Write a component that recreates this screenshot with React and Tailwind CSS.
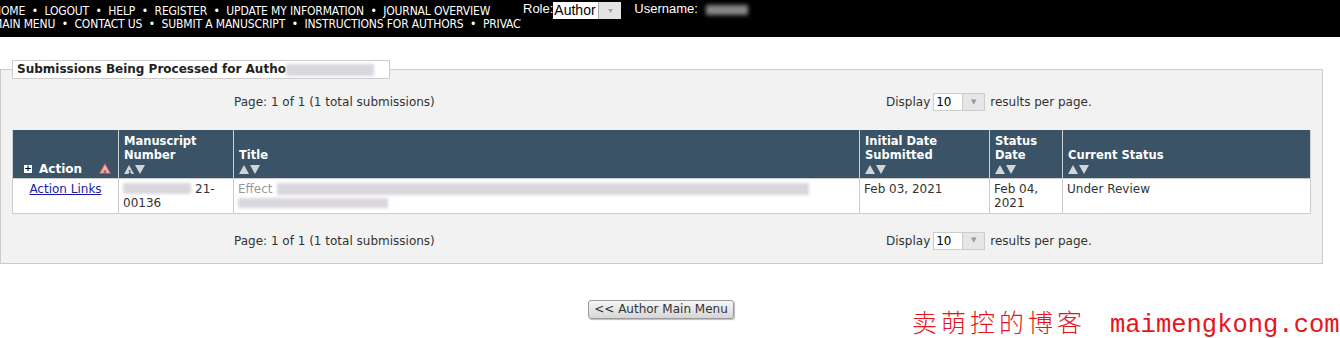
import React from "react";

const body = { fontFamily: '"DejaVu Sans", Verdana, sans-serif' };

function SortArrows({ first }) {
  return (
    <svg width="22" height="10" viewBox="0 0 22 10" className="inline-block">
      <polygon points="0,10 5,1 10,10" fill="#d4d4d4" />
      {first && (
        <text x="4" y="9.5" fontSize="5" fill="#333" fontFamily="DejaVu Sans">
          1
        </text>
      )}
      <polygon points="11,1 21,1 16,10" fill="#d4d4d4" />
    </svg>
  );
}

function Blur({ w, h = 11, className = "" }) {
  return (
    <span
      className={`inline-block align-middle bg-[#d9d6de] blur-[1.5px] ${className}`}
      style={{ width: w, height: h }}
    />
  );
}

function PageRow() {
  return (
    <div className="flex items-center h-[18px] text-[12px] text-[#333]">
      <div className="w-[874px] pl-[222px]">Page: 1 of 1 (1 total submissions)</div>
      <div className="flex items-center">
        <span>Display</span>
        <span className="ml-[3px] flex h-[18px] w-[52px] border border-[#ccc] bg-white">
          <span className="w-[29px] pl-[2px] leading-[17px] text-[12px] text-black border-r border-[#ccc]">10</span>
          <span className="flex-1 bg-[#e6e6e6] flex items-center justify-center text-[7px] text-[#999]">▼</span>
        </span>
        <span className="ml-[5px]">results per page.</span>
      </div>
    </div>
  );
}

const th =
  "border-l border-r border-[#c8d0d6] px-[5px] pb-[2px] align-bottom text-left font-bold text-white text-[11.5px] leading-[14px]";
const td = "border border-[#ccc] px-[4px] pt-[3px] align-top text-[12px] leading-[14px] text-[#333]";

export default function App() {
  return (
    <div className="relative w-[1340px] h-[338px] bg-white overflow-hidden" style={body}>
      {/* ──── Top bar ──── */}
      <div className="flex h-[37px] bg-black text-white">
        <div
          className="w-[528px] -ml-[7px] overflow-hidden whitespace-nowrap pt-[5px] text-[12px] leading-[13px] tracking-[-0.15px]"
          style={{ fontFamily: '"DejaVu Sans Condensed", "Liberation Sans", sans-serif' }}
        >
          <div>HOME &nbsp;•&nbsp; LOGOUT &nbsp;•&nbsp; HELP &nbsp;•&nbsp; REGISTER &nbsp;•&nbsp; UPDATE MY INFORMATION &nbsp;•&nbsp; JOURNAL OVERVIEW</div>
          <div>MAIN MENU &nbsp;•&nbsp; CONTACT US &nbsp;•&nbsp; SUBMIT A MANUSCRIPT &nbsp;•&nbsp; INSTRUCTIONS FOR AUTHORS &nbsp;•&nbsp; PRIVACY POLICY</div>
        </div>
        <div className="flex items-start pt-[1px] text-[13px] leading-[16px]" style={{ fontFamily: '"Liberation Sans", sans-serif' }}>
          <span className="ml-[2px]">Role:</span>
          <span className="mt-[1px] flex h-[17px] w-[68px] bg-white text-black">
            <span className="w-[46px] pl-[1px] border-r border-[#aaa] leading-[17px] text-[14px]">Author</span>
            <span className="flex-1 bg-[#e3e3e3] flex items-center justify-center text-[7px] text-[#999]">▼</span>
          </span>
          <span className="ml-[13px]">Username:</span>
          <span className="ml-[8px] mt-[4px] inline-block h-[10px] w-[42px] bg-[#888] blur-[2px]" />
        </div>
      </div>

      {/* ──── Submissions ──── */}
      <fieldset className="mt-[23px] w-[1322px] border border-[#ccc] bg-[#f2f2f2] px-[11px] pb-[13px]">
        <legend className="w-[378px] border border-[#ccc] bg-white px-[4px] text-[12px] leading-[17px] font-bold text-[#222]">
          Submissions Being Processed for Autho<Blur w={88} h={12} className="bg-[#c9c6d3]" />
        </legend>

        <div className="mt-[14px]">
          <PageRow />
        </div>

        <table className="mt-[19px] w-[1298px] border-collapse table-fixed">
          <colgroup>
            <col className="w-[106px]" />
            <col className="w-[115px]" />
            <col className="w-[626px]" />
            <col className="w-[130px]" />
            <col className="w-[73px]" />
            <col className="w-[248px]" />
          </colgroup>
          <thead>
            <tr className="h-[48px] bg-[#3a5367]">
              <th className={th}>
                <div className="flex items-center pl-[6px] pr-[2px]">
                  <span className="flex h-[8px] w-[8px] items-center justify-center bg-white text-[9px] leading-none font-bold text-black">+</span>
                  <span className="ml-[7px] text-[12px]">Action</span>
                  <svg width="12" height="11" viewBox="0 0 12 11" className="ml-auto">
                    <polygon points="0.5,10.5 6,0.5 11.5,10.5" fill="#e8b4b8" stroke="#c0504d" />
                    <text x="4.3" y="9.5" fontSize="5" fill="#b33" fontFamily="DejaVu Sans">a</text>
                  </svg>
                </div>
              </th>
              <th className={th}>
                Manuscript<br />Number<br /><SortArrows first />
              </th>
              <th className={th}>
                Title<br /><SortArrows />
              </th>
              <th className={th}>
                Initial Date<br />Submitted<br /><SortArrows />
              </th>
              <th className={th}>
                Status<br />Date<br /><SortArrows />
              </th>
              <th className={th}>
                Current Status<br /><SortArrows />
              </th>
            </tr>
          </thead>
          <tbody>
            <tr className="h-[35px] bg-white">
              <td className={`${td} text-center`}>
                <a href="#" className="text-[#1a1aa6] underline">Action Links</a>
              </td>
              <td className={td}>
                <span className="flex items-center">
                  <Blur w={68} /> <span className="ml-[4px]">21-</span>
                </span>
                00136
              </td>
              <td className={td}>
                <div className="flex items-center h-[14px]">
                  <span className="text-[#999]">Effect</span>
                  <Blur w={532} h={12} className="ml-[4px]" />
                </div>
                <div className="flex items-center h-[14px]">
                  <Blur w={150} h={10} />
                </div>
              </td>
              <td className={td}>Feb 03, 2021</td>
              <td className={td}>
                Feb 04,<br />2021
              </td>
              <td className={td}>Under Review</td>
            </tr>
          </tbody>
        </table>

        <div className="mt-[18px]">
          <PageRow />
        </div>
      </fieldset>

      {/* ──── Back button ──── */}
      <div className="w-[1322px] mt-[36px] flex justify-center">
        <button className="h-[19px] w-[146px] rounded-[3px] border border-[#9a9a9a] bg-gradient-to-b from-[#f6f6f6] to-[#d6d6d6] text-[12px] leading-[17px] text-[#333] shadow-[1px_1px_1px_#bbb]">
          &lt;&lt; Author Main Menu
        </button>
      </div>

      {/* ──── Watermark ──── */}
      <div className="absolute left-[912px] top-[303px] flex items-baseline whitespace-nowrap text-[#e8141b]">
        <span className="text-[25px] tracking-[4px]" style={{ fontFamily: '"Noto Sans CJK SC", sans-serif', fontWeight: 300 }}>
          卖萌控的博客
        </span>
        <span className="ml-[24px] text-[25.5px]" style={{ fontFamily: '"Liberation Mono", monospace' }}>
          maimengkong.com
        </span>
      </div>
    </div>
  );
}
